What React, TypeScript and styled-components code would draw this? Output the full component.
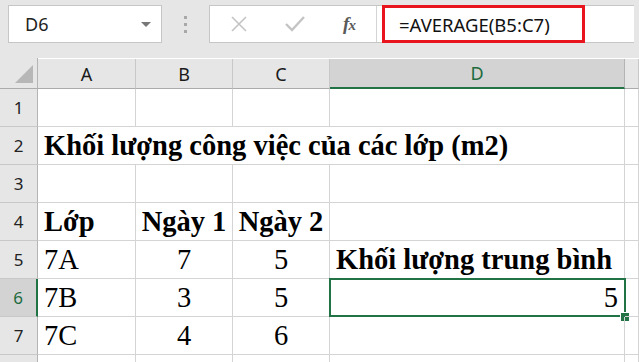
import React from 'react';
import styled, { createGlobalStyle } from 'styled-components';

const GlobalStyle = createGlobalStyle`
  html, body {
    margin: 0;
    padding: 0;
    background: #fff;
    overflow: hidden;
  }
`;

const Page = styled.div`
  width: 639px;
  height: 362px;
  overflow: hidden;
  display: flex;
  flex-direction: column;
  background: #fff;
`;

const Toolbar = styled.div`
  height: 58px;
  flex: none;
  display: flex;
  align-items: flex-start;
  padding: 5px 5px 0 8px;
  box-sizing: border-box;
  background: #e6e6e6;
`;

const NameBox = styled.div`
  width: 154px;
  height: 38px;
  box-sizing: border-box;
  border: 1px solid #c6c6c6;
  background: #fff;
  display: flex;
  align-items: center;
  justify-content: space-between;
  padding: 0 10px 0 16px;
  font-family: "Noto Sans", "Open Sans", sans-serif;
  font-size: 18px;
  color: #222;
`;

const Caret = styled.span`
  width: 0;
  height: 0;
  border-left: 5px solid transparent;
  border-right: 5px solid transparent;
  border-top: 5px solid #777;
`;

const Grip = styled.div`
  width: 47px;
  height: 38px;
  display: flex;
  flex-direction: column;
  align-items: center;
  justify-content: center;
  gap: 4px;
`;

const Dot = styled.span`
  width: 3px;
  height: 3px;
  background: #a8a8a8;
`;

const FormulaBar = styled.div`
  width: 425px;
  height: 38px;
  box-sizing: border-box;
  border: 1px solid #c6c6c6;
  border-right: none;
  background: #fff;
  display: flex;
  align-items: stretch;
`;

const IconSlot = styled.div<{ $w: number }>`
  width: ${(p) => p.$w}px;
  display: flex;
  align-items: center;
  justify-content: center;
`;

const Fx = styled.span`
  font-family: "Liberation Serif", serif;
  font-style: italic;
  font-weight: 700;
  font-size: 19px;
  color: #5a5a5a;
  letter-spacing: -1px;
`;

const FxX = styled.span`
  font-size: 15px;
`;

const FxDivider = styled.div`
  width: 1px;
  background: #d4d4d4;
  margin: 0 5px 0 0;
`;

const FormulaInput = styled.div`
  width: 203px;
  margin-top: -1px;
  margin-bottom: -1px;
  box-sizing: border-box;
  border: 3px solid #e8151f;
  display: flex;
  align-items: center;
  padding-left: 14px;
  font-family: "Noto Sans", "Open Sans", sans-serif;
  font-size: 18.5px;
  color: #111;
`;

const Sheet = styled.div`
  flex: 1;
  display: grid;
  grid-template-columns: 38px 98px 97px 97px 295px 14px;
  grid-template-rows: 31px repeat(8, 38px);
  overflow: hidden;
`;

const Corner = styled.div`
  background: #e6e6e6;
  border-right: 1px solid #b4b4b4;
  border-bottom: 1px solid #ababab;
  display: flex;
  align-items: flex-end;
  justify-content: flex-end;
  padding: 0 4px 5px 0;
  box-sizing: border-box;
`;

const Triangle = styled.span`
  width: 0;
  height: 0;
  border-left: 18px solid transparent;
  border-bottom: 18px solid #b7b7b7;
`;

const ColHead = styled.div<{ $active?: boolean }>`
  background: ${(p) => (p.$active ? '#d3d3d3' : '#e6e6e6')};
  border-right: 1px solid ${(p) => (p.$active ? '#b4b4b4' : '#c8c8c8')};
  border-bottom: ${(p) => (p.$active ? '2px solid #217346' : '1px solid #ababab')};
  margin-top: 1px;
  box-sizing: border-box;
  display: flex;
  align-items: center;
  justify-content: center;
  font-family: "Noto Sans", "Open Sans", sans-serif;
  font-size: 18px;
  color: ${(p) => (p.$active ? '#1e6b40' : '#1a1a1a')};
`;

const RowHead = styled.div<{ $active?: boolean }>`
  background: ${(p) => (p.$active ? '#d3d3d3' : '#e6e6e6')};
  border-right: ${(p) => (p.$active ? '2px solid #217346' : '1px solid #b4b4b4')};
  border-bottom: 1px solid #c8c8c8;
  box-sizing: border-box;
  display: flex;
  align-items: center;
  justify-content: center;
  font-family: "Noto Sans", "Open Sans", sans-serif;
  font-size: 17px;
  color: ${(p) => (p.$active ? '#1e6b40' : '#222')};
`;

const Cell = styled.div<{ $align?: 'left' | 'center' | 'right'; $bold?: boolean; $span?: number; $selected?: boolean }>`
  position: relative;
  grid-column: span ${(p) => p.$span ?? 1};
  border-right: 1px solid #d4d4d4;
  border-bottom: 1px solid #d4d4d4;
  box-sizing: border-box;
  display: flex;
  align-items: flex-end;
  justify-content: ${(p) => (p.$align === 'center' ? 'center' : p.$align === 'right' ? 'flex-end' : 'flex-start')};
  padding: 0 6px 4px 6px;
  font-family: "Liberation Serif", "Times New Roman", serif;
  font-size: 28.5px;
  line-height: 28px;
  font-weight: ${(p) => (p.$bold ? 700 : 400)};
  color: #000;
  white-space: nowrap;

  ${(p) =>
    p.$selected &&
    `
    &::before {
      content: '';
      position: absolute;
      left: -1px;
      top: -1px;
      right: -2px;
      bottom: -1px;
      border: 2px solid #217346;
      pointer-events: none;
    }
    &::after {
      content: '';
      position: absolute;
      right: -6px;
      bottom: -6px;
      width: 8px;
      height: 8px;
      background: #217346;
      border: 1px solid #fff;
    }
  `}
`;

const XIcon = () => (
  <svg width="18" height="18" viewBox="0 0 18 18">
    <path d="M2 2 L16 16 M16 2 L2 16" stroke="#c4c4c4" strokeWidth="1.6" fill="none" />
  </svg>
);

const CheckIcon = () => (
  <svg width="22" height="18" viewBox="0 0 22 18">
    <path d="M2 9 L8 15 L20 2" stroke="#c4c4c4" strokeWidth="2.4" fill="none" />
  </svg>
);

type Row = { n: number; cells: React.ReactNode };

const rows: Row[] = [
  {
    n: 1,
    cells: (
      <>
        <Cell /><Cell /><Cell /><Cell /><Cell />
      </>
    ),
  },
  {
    n: 2,
    cells: (
      <>
        <Cell $bold $span={4}>Khối lượng công việc của các lớp (m2)</Cell>
        <Cell />
      </>
    ),
  },
  {
    n: 3,
    cells: (
      <>
        <Cell /><Cell /><Cell /><Cell /><Cell />
      </>
    ),
  },
  {
    n: 4,
    cells: (
      <>
        <Cell $bold>Lớp</Cell>
        <Cell $bold $align="center">Ngày 1</Cell>
        <Cell $bold $align="center">Ngày 2</Cell>
        <Cell /><Cell />
      </>
    ),
  },
  {
    n: 5,
    cells: (
      <>
        <Cell>7A</Cell>
        <Cell $align="center">7</Cell>
        <Cell $align="center">5</Cell>
        <Cell $bold>Khối lượng trung bình</Cell>
        <Cell />
      </>
    ),
  },
  {
    n: 6,
    cells: (
      <>
        <Cell>7B</Cell>
        <Cell $align="center">3</Cell>
        <Cell $align="center">5</Cell>
        <Cell $align="right" $selected>5</Cell>
        <Cell />
      </>
    ),
  },
  {
    n: 7,
    cells: (
      <>
        <Cell>7C</Cell>
        <Cell $align="center">4</Cell>
        <Cell $align="center">6</Cell>
        <Cell /><Cell />
      </>
    ),
  },
  {
    n: 8,
    cells: (
      <>
        <Cell /><Cell /><Cell /><Cell /><Cell />
      </>
    ),
  },
];

const App: React.FC = () => (
  <Page>
    <GlobalStyle />
    <Toolbar>
      <NameBox>
        D6
        <Caret />
      </NameBox>
      <Grip>
        <Dot /><Dot /><Dot />
      </Grip>
      <FormulaBar>
        <IconSlot $w={58}><XIcon /></IconSlot>
        <IconSlot $w={54}><CheckIcon /></IconSlot>
        <IconSlot $w={54}><Fx>f<FxX>x</FxX></Fx></IconSlot>
        <FxDivider />
        <FormulaInput>=AVERAGE(B5:C7)</FormulaInput>
      </FormulaBar>
    </Toolbar>
    <Sheet>
      <Corner><Triangle /></Corner>
      <ColHead>A</ColHead>
      <ColHead>B</ColHead>
      <ColHead>C</ColHead>
      <ColHead $active>D</ColHead>
      <ColHead />
      {rows.map((r) => (
        <React.Fragment key={r.n}>
          <RowHead $active={r.n === 6}>{r.n === 8 ? '' : r.n}</RowHead>
          {r.cells}
        </React.Fragment>
      ))}
    </Sheet>
  </Page>
);

export default App;
